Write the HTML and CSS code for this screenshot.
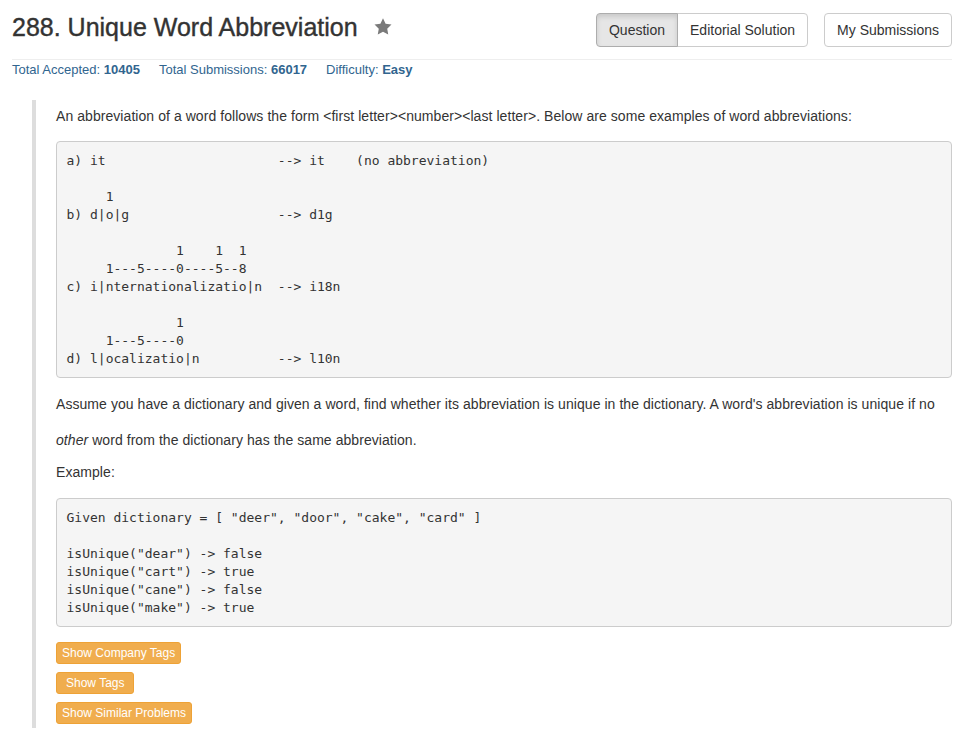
FILE: index.html
```html
<!DOCTYPE html>
<html>
<head>
<meta charset="utf-8">
<link rel="stylesheet" href="styles.css">
</head>
<body>
<div class="container">
  <div class="header">
    <h3 class="title">288. Unique Word Abbreviation
      <svg class="star" width="18" height="17" viewBox="0 0 24 23"><path d="M12 0.5l3.5 7.3 8 1.1-5.8 5.6 1.4 7.9L12 18.6l-7.1 3.8 1.4-7.9L0.5 8.9l8-1.1z" fill="#7a7a7a"/></svg>
    </h3>
    <div class="actions">
      <div class="btn-group">
        <span class="btn active">Question</span><span class="btn">Editorial Solution</span>
      </div>
      <span class="btn single">My Submissions</span>
    </div>
  </div>
  <div class="stats">
    <span>Total Accepted: <b>10405</b></span>
    <span>Total Submissions: <b>66017</b></span>
    <span>Difficulty: <b>Easy</b></span>
  </div>
  <blockquote class="question">
    <p class="p1">An abbreviation of a word follows the form &lt;first letter&gt;&lt;number&gt;&lt;last letter&gt;. Below are some examples of word abbreviations:</p>
<pre class="code first">a) it                      --&gt; it    (no abbreviation)

     1
b) d|o|g                   --&gt; d1g

              1    1  1
     1---5----0----5--8
c) i|nternationalizatio|n  --&gt; i18n

              1
     1---5----0
d) l|ocalizatio|n          --&gt; l10n</pre>
    <p class="p2">Assume you have a dictionary and given a word, find whether its abbreviation is unique in the dictionary. A word's abbreviation is unique if no <em>other</em> word from the dictionary has the same abbreviation.</p>
    <p class="p3">Example:</p>
<pre class="code second">Given dictionary = [ "deer", "door", "cake", "card" ]

isUnique("dear") -&gt; false
isUnique("cart") -&gt; true
isUnique("cane") -&gt; false
isUnique("make") -&gt; true</pre>
    <div class="tags">
      <span class="tag">Show Company Tags</span>
      <span class="tag wide">Show Tags</span>
      <span class="tag">Show Similar Problems</span>
    </div>
  </blockquote>
</div>
</body>
</html>
```
FILE: styles.css
```css
html, body {
  margin: 0;
  padding: 0;
  background: #fff;
}
body {
  font-family: "Liberation Sans", Arial, sans-serif;
  color: #333;
  font-size: 14px;
}
.container {
  width: 940px;
  margin-left: 12px;
}
.header {
  display: flex;
  justify-content: space-between;
  align-items: flex-start;
  padding-top: 13px;
  height: 46px;
  border-bottom: 1px solid #eee;
}
.title {
  margin: 1px 0 0 0;
  font-size: 25px;
  font-weight: normal;
  line-height: 26px;
  color: #333;
  -webkit-text-stroke: 0.4px #333;
  display: flex;
  align-items: center;
}
.star {
  margin-left: 16px;
  margin-top: -1px;
}
.actions {
  display: flex;
  gap: 16px;
}
.btn-group {
  display: flex;
}
.btn {
  display: inline-block;
  padding: 6px 12px;
  font-size: 14px;
  line-height: 20px;
  border: 1px solid #ccc;
  background: #fff;
  color: #333;
  border-radius: 4px;
}
.btn-group .btn:first-child {
  border-radius: 4px 0 0 4px;
}
.btn-group .btn:last-child {
  border-radius: 0 4px 4px 0;
  margin-left: -1px;
}
.btn.active {
  background: #e6e6e6;
  border-color: #adadad;
  box-shadow: inset 0 3px 5px rgba(0,0,0,0.125);
  position: relative;
  z-index: 1;
}
.stats {
  display: flex;
  gap: 19px;
  font-size: 13px;
  line-height: 17px;
  padding-top: 1px;
  color: #31658f;
}
.stats b {
  font-weight: bold;
}
.question {
  margin: 22px 0 0 20px;
  padding: 1px 0 4px 20px;
  border-left: 4px solid #ddd;
}
p {
  margin: 0 0 10px 0;
  line-height: 30px;
  letter-spacing: 0.06px;
}
.p2 {
  line-height: 36px;
  margin-bottom: -1px;
}
.p3 {
  margin-bottom: 11px;
}
.code {
  font-family: "DejaVu Sans Mono", monospace;
  font-size: 13px;
  line-height: 18px;
  color: #333;
  background: #f5f5f5;
  border: 1px solid #ccc;
  border-radius: 4px;
  padding: 9.5px;
  margin: 0 0 8px 0;
  white-space: pre;
}
.code.second {
  margin-bottom: 15px;
}
.tags {
  display: flex;
  flex-direction: column;
  align-items: flex-start;
  gap: 8px;
}
.tag {
  display: inline-block;
  font-size: 12px;
  line-height: 18px;
  padding: 1px 5px;
  color: #fff;
  background: #f0ad4e;
  border: 1px solid #eea236;
  border-radius: 3px;
}
.tag.wide {
  padding: 1px 9px;
}
```
